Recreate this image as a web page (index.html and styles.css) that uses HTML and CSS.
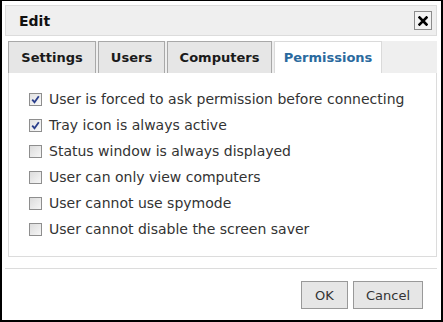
FILE: index.html
```html
<!DOCTYPE html>
<html lang="en">
<head>
    <meta charset="UTF-8">
    <title>Edit</title>
    <link rel="stylesheet" href="styles.css">
</head>
<body>
    <div class="dialog">
        <div class="titlebar">
            <span class="title">Edit</span>
            <button class="close-button" title="Close">
                <svg width="10" height="10" viewBox="0 0 10 10"><path d="M1.5 1.5 L8.5 8.5 M8.5 1.5 L1.5 8.5" stroke="#000" stroke-width="2.6" stroke-linecap="square"/></svg>
            </button>
        </div>

        <div class="tabs">
            <div class="tab tab-settings">Settings</div>
            <div class="tab tab-users">Users</div>
            <div class="tab tab-computers">Computers</div>
            <div class="tab tab-permissions active">Permissions</div>
        </div>

        <div class="panel">
            <label class="option"><span class="box checked"><svg width="9" height="9" viewBox="0 0 9 9"><path d="M1.2 4.6 L3.5 7.2 L7.8 1.2" fill="none" stroke="#2b3f8c" stroke-width="1.8"/></svg></span>User is forced to ask permission before connecting</label>
            <label class="option"><span class="box checked"><svg width="9" height="9" viewBox="0 0 9 9"><path d="M1.2 4.6 L3.5 7.2 L7.8 1.2" fill="none" stroke="#2b3f8c" stroke-width="1.8"/></svg></span>Tray icon is always active</label>
            <label class="option"><span class="box"></span>Status window is always displayed</label>
            <label class="option"><span class="box"></span>User can only view computers</label>
            <label class="option"><span class="box"></span>User cannot use spymode</label>
            <label class="option"><span class="box"></span>User cannot disable the screen saver</label>
        </div>

        <div class="footer">
            <button class="button ok-button">OK</button>
            <button class="button cancel-button">Cancel</button>
        </div>
    </div>
</body>
</html>
```

FILE: styles.css
```css
body {
    margin: 0;
    font-family: "DejaVu Sans", Verdana, sans-serif;
    background: #fff;
}
.dialog {
    box-sizing: border-box;
    width: 443px;
    height: 322px;
    border: 2px solid #000;
    border-top-width: 1px;
    padding: 4px 4px 0 3px;
    background: #fff;
}
.titlebar {
    box-sizing: border-box;
    height: 31px;
    display: flex;
    align-items: center;
    justify-content: space-between;
    background: #efefef;
    border: 1px solid #dcdcdc;
    padding: 0 4px 0 13px;
}
.title {
    font-size: 14px;
    font-weight: bold;
    color: #111;
}
.close-button {
    box-sizing: border-box;
    width: 18px;
    height: 19px;
    padding: 0;
    border: 1px solid #8c8c8c;
    background: #f3f3f3;
    display: flex;
    align-items: center;
    justify-content: center;
}
.tabs {
    display: flex;
    gap: 2px;
    margin: 5px 0 0 3px;
    height: 32px;
    background: #efefef;
}
.tab {
    box-sizing: border-box;
    height: 32px;
    display: flex;
    align-items: center;
    justify-content: center;
    font-size: 13px;
    font-weight: bold;
    color: #1a1a1a;
    background: #e6e6e6;
    border: 1px solid #a8a8a8;
    border-bottom: none;
}
.tab-settings { width: 88px; }
.tab-users { width: 67px; }
.tab-computers { width: 105px; }
.tab-permissions { width: 108px; }
.tab.active {
    background: #fff;
    border-color: #dadada;
    color: #2a6a9e;
}
.panel {
    box-sizing: border-box;
    margin-left: 3px;
    height: 184px;
    border: 1px solid #dcdcdc;
    border-top: none;
    padding: 13px 0 0 20px;
}
.option {
    display: flex;
    align-items: center;
    height: 26px;
    font-size: 14px;
    color: #333;
}
.box {
    box-sizing: border-box;
    width: 13px;
    height: 13px;
    margin-right: 7px;
    border: 1px solid #8e8e8e;
    background: linear-gradient(135deg, #dcdcdc, #f6f6f6);
    display: flex;
    align-items: center;
    justify-content: center;
}
.box.checked {
    background: linear-gradient(135deg, #e2e2e2, #fafafa);
}
.footer {
    margin-top: 11px;
    border-top: 1px solid #dcdcdc;
    display: flex;
    justify-content: flex-end;
    gap: 5px;
    padding: 12px 14px 0 0;
}
.button {
    box-sizing: border-box;
    height: 28px;
    font-family: "DejaVu Sans", Verdana, sans-serif;
    font-size: 13px;
    color: #333;
    background: #e6e6e6;
    border: 1px solid #999;
    padding: 0;
}
.ok-button { width: 47px; }
.cancel-button { width: 70px; }
```
